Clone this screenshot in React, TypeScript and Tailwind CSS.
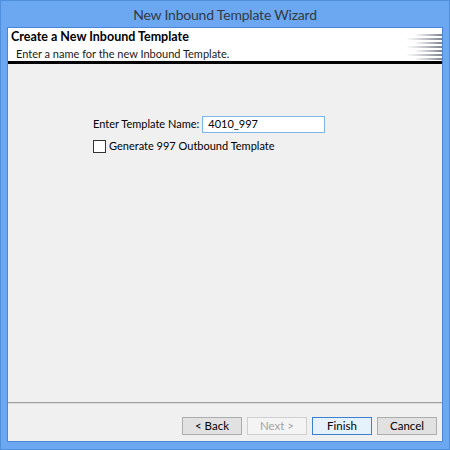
import React from 'react';

const font = { fontFamily: 'Lato, "Open Sans", "Liberation Sans", sans-serif' };

function Stripes() {
  const ys = [3, 7, 11, 15, 19, 23, 27];
  return (
    <svg width="40" height="32" viewBox="0 0 40 32" className="absolute right-0 top-[3px]">
      <defs>
        <linearGradient id="fade" x1="0" x2="1" y1="0" y2="0">
          <stop offset="0" stopColor="#ffffff" />
          <stop offset="0.45" stopColor="#c9ccd2" />
          <stop offset="1" stopColor="#7d838e" />
        </linearGradient>
      </defs>
      {ys.map((y, i) => (
        <rect key={y} x={i % 2 ? 4 : 12} y={y} width={i % 2 ? 36 : 28} height="2" fill="url(#fade)" />
      ))}
    </svg>
  );
}

function Btn({ label, primary, disabled }: { label: string; primary?: boolean; disabled?: boolean }) {
  return (
    <div
      className={
        'w-[60px] h-[18px] flex items-center justify-center text-[11.5px] border ' +
        (disabled
          ? 'border-[#cfcfcf] bg-[#f4f4f4] text-[#a3a3a3]'
          : primary
          ? 'border-[#3c7fcf] bg-[#e5f1fb] text-black'
          : 'border-[#adadad] bg-[#e1e1e1] text-black')
      }
    >
      {label}
    </div>
  );
}

export default function App() {
  return (
    <div className="w-[450px] h-[450px] bg-[#6ba8f1] border border-[#4f8fdb] flex flex-col" style={font}>
      <div className="h-[26px] flex items-center justify-center text-[14px] tracking-[-0.2px] text-[#333a44]">
        New Inbound Template Wizard
      </div>
      <div className="flex-1 mx-[6px] mb-[7px] border border-[#4a86d6] bg-[#f0f0f0] flex flex-col">
        <div className="h-[36px] bg-white relative border-b-[3px] border-black">
          <Stripes />
          <div className="pl-[3px] pt-[1px] text-[12.5px] font-bold text-black leading-[16px]">
            Create a New Inbound Template
          </div>
          <div className="pl-[8px] pt-[1px] text-[11px] text-[#1a1a1a] leading-[16px]">
            Enter a name for the new Inbound Template.
          </div>
        </div>
        <div className="flex-1 pl-[85px] pt-[52px]">
          <div className="flex items-center gap-[3px]">
            <span className="text-[11px] text-black">Enter Template Name:</span>
            <div className="w-[123px] h-[17px] border border-[#7eb4ea] bg-white flex items-center pl-[5px] text-[11px] text-black">
              4010_997
            </div>
          </div>
          <div className="flex items-center gap-[3px] mt-[5px]">
            <div className="w-[13px] h-[13px] border border-[#333333] bg-white" />
            <span className="text-[11px] text-black">Generate 997 Outbound Template</span>
          </div>
        </div>
        <div className="border-t border-[#a0a0a0] h-[2px] bg-[#dcdcdc]" />
        <div className="h-[37px] flex items-start justify-end gap-[5px] pt-[13px] pr-[5px]">
          <Btn label="< Back" />
          <Btn label="Next >" disabled />
          <Btn label="Finish" primary />
          <Btn label="Cancel" />
        </div>
      </div>
    </div>
  );
}
